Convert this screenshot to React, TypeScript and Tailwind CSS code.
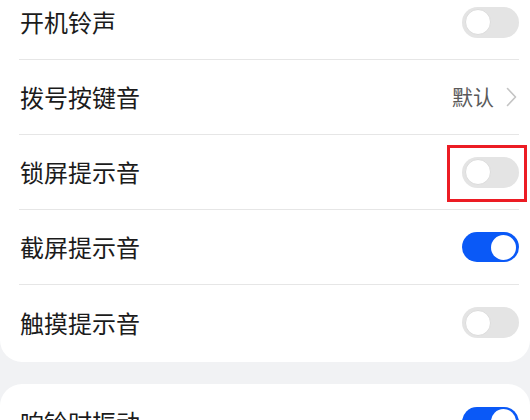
import type { ReactNode } from 'react';

type Row = {
  label: string;
  kind: 'toggle' | 'link';
  on?: boolean;
  value?: string;
  marked?: boolean;
};

const soundRows: Row[] = [
  { label: '开机铃声', kind: 'toggle', on: false },
  { label: '拨号按键音', kind: 'link', value: '默认' },
  { label: '锁屏提示音', kind: 'toggle', on: false, marked: true },
  { label: '截屏提示音', kind: 'toggle', on: true },
  { label: '触摸提示音', kind: 'toggle', on: false },
];

function Toggle({ on }: { on: boolean }) {
  return (
    <div
      className={
        on
          ? 'flex h-[30px] w-[57px] items-center justify-end rounded-full bg-[#0a59f7] px-[3px]'
          : 'flex h-[31px] w-[57px] items-center justify-start rounded-full bg-[#e4e4e4] px-[3px]'
      }
    >
      <div
        className={
          on
            ? 'h-[25px] w-[25px] rounded-full bg-white'
            : 'h-[26px] w-[26px] rounded-full border border-[#dcdcdc] bg-white'
        }
      />
    </div>
  );
}

function Chevron() {
  return (
    <svg width="11" height="20" viewBox="0 0 11 20" fill="none">
      <path d="M1.5 1.5 L9.5 10 L1.5 18.5" stroke="#c4c4c4" strokeWidth="1.6" strokeLinecap="round" strokeLinejoin="round" />
    </svg>
  );
}

function SettingRow({ row, last }: { row: Row; last: boolean }) {
  let right: ReactNode;
  if (row.kind === 'link') {
    right = (
      <div className="flex items-center gap-[12px] pr-[2px]">
        <span className="text-[21px] text-[#5a5a5a]">{row.value}</span>
        <Chevron />
      </div>
    );
  } else {
    right = (
      <div className="relative">
        <Toggle on={!!row.on} />
        {row.marked && (
          <div className="absolute -bottom-[14px] -left-[15px] -right-[8px] -top-[12px] border-[3px] border-[#ec1c24]" />
        )}
      </div>
    );
  }

  return (
    <div
      className={
        last
          ? 'ml-[19px] mr-[11px] flex h-[75px] items-center justify-between'
          : 'ml-[19px] mr-[11px] flex h-[75px] items-center justify-between border-b border-[#e6e6e6]'
      }
    >
      <span className="pl-[1px] text-[24px] text-[#1b1b1b]">{row.label}</span>
      {right}
    </div>
  );
}

export default function App() {
  return (
    <div
      className="h-[420px] w-[530px] overflow-hidden bg-[#f1f2f4]"
      style={{ fontFamily: '"Noto Sans CJK SC", "Noto Sans", sans-serif' }}
    >
      <section className="-mt-[15px] rounded-b-[22px] bg-white pt-0">
        {soundRows.map((row, i) => (
          <SettingRow key={row.label} row={row} last={i === soundRows.length - 1} />
        ))}
        <div className="h-[2px]" />
      </section>

      <section className="mt-[22px] rounded-t-[22px] bg-white">
        <SettingRow row={{ label: '响铃时振动', kind: 'toggle', on: true }} last />
      </section>
    </div>
  );
}
